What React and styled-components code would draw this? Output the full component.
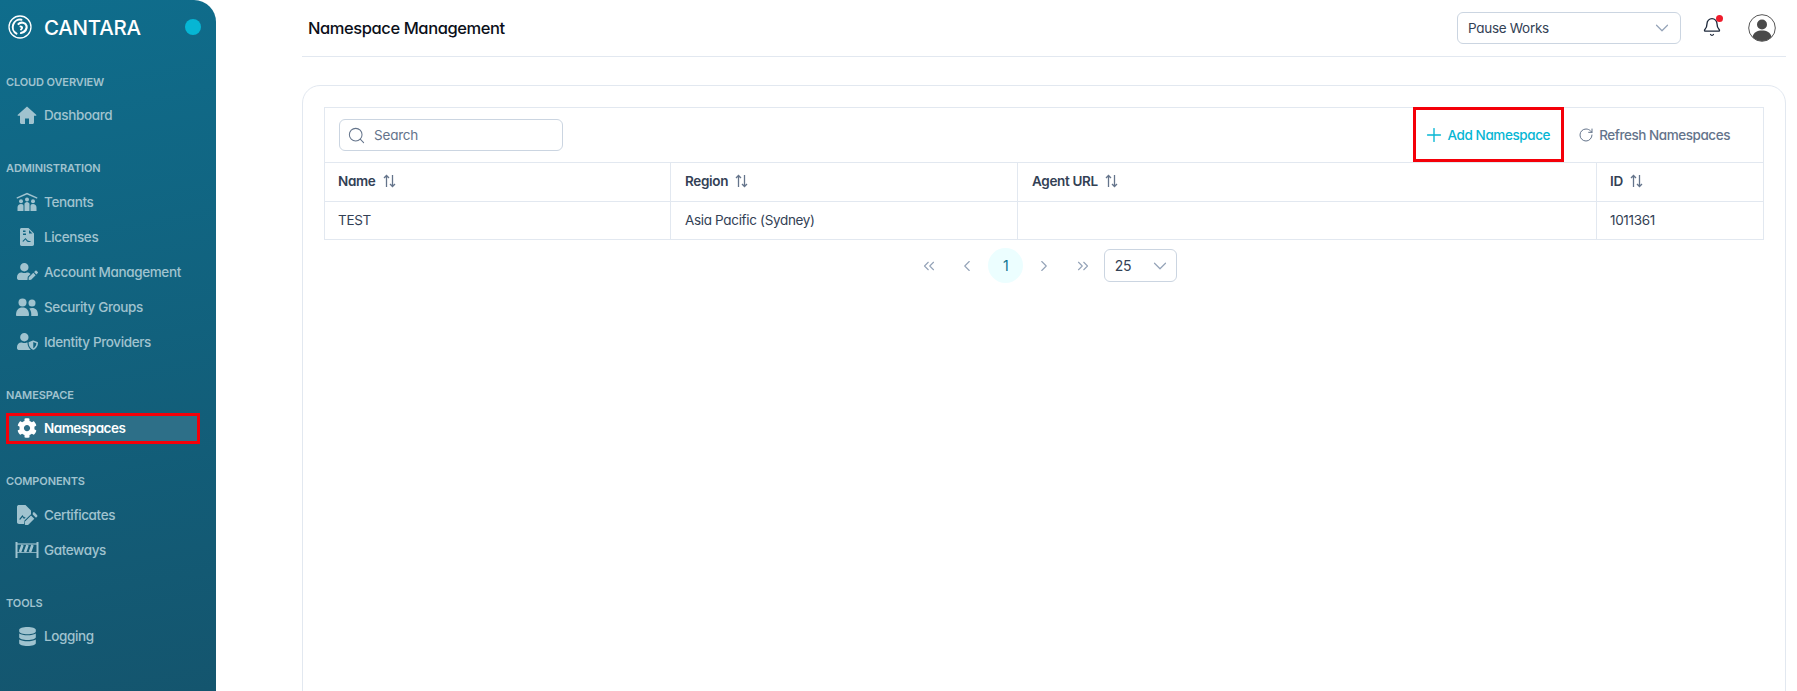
import React from "react";
import styled, { createGlobalStyle } from "styled-components";
import { Bell, ChevronDown, ChevronLeft, ChevronRight, ChevronsLeft, ChevronsRight, Plus, RotateCw, Search } from "lucide-react";
import { FaCog, FaDatabase, FaUserEdit, FaUserShield } from "react-icons/fa";

const Global = createGlobalStyle`
  html, body { margin: 0; padding: 0; background: #fff; }
  body { font-family: Inter, "Noto Sans", sans-serif; font-feature-settings: "cv11" 1; color: #334155; }
  * { box-sizing: border-box; }
`;

const Page = styled.div`
  display: flex;
  height: 691px;
  overflow: hidden;
`;
const Sidebar = styled.aside`
  width: 216px;
  flex: none;
  background: linear-gradient(170deg, #0f6d8c 0%, #14556e 100%);
  border-top-right-radius: 22px;
  display: flex;
  flex-direction: column;
`;
const Brand = styled.div`
  height: 54px;
  display: flex;
  align-items: center;
  padding: 0 15px 0 8px;
  color: #fff;
`;
const BrandName = styled.span`
  font-size: 20.5px;
  font-weight: 500;
  margin-left: 12px;
  flex: 1;
  letter-spacing: -0.25px;
`;
const Dot = styled.span`
  width: 16px;
  height: 16px;
  border-radius: 50%;
  background: #06b6d4;
`;
const Groups = styled.nav`
  display: flex;
  flex-direction: column;
  gap: 28px;
  padding-top: 20px;
`;
const Group = styled.div`
  display: flex;
  flex-direction: column;
`;
const SectionLabel = styled.div`
  height: 16px;
  line-height: 16px;
  margin: -0.5px 0 8px 6px;
  font-size: 11px;
  font-weight: 600;
  color: #a0c3cf;
  letter-spacing: -0.12px;
`;
const NavRow = styled.div`
  height: 35px;
  display: flex;
  align-items: center;
  margin-left: 6px;
  width: 194px;
  position: relative;
  font-size: 13.5px;
  font-weight: ${p => (p.$active ? 600 : 500)};
  color: ${p => (p.$active ? "#fff" : "#a0c3cf")};
  letter-spacing: ${p => (p.$active ? "-0.5px" : "-0.38px")};
  &::before {
    content: "";
    display: ${p => (p.$active ? "block" : "none")};
    position: absolute;
    inset: 2px 0;
    background: #2d6f88;
    border: 3px solid #f40009;
  }
`;
const NavIcon = styled.span`
  position: relative;
  width: 38px;
  flex: none;
  display: flex;
  justify-content: center;
  padding-left: 4px;
  font-size: 20px;
`;
const NavText = styled.span`
  position: relative;
`;
const Main = styled.main`
  flex: 1;
  min-width: 0;
  padding: 0 11px 0 86px;
`;
const Header = styled.header`
  height: 57px;
  display: flex;
  align-items: center;
  border-bottom: 1px solid #e2e8f0;
  padding: 0 10px 1px 6px;
`;
const Title = styled.h1`
  margin: 0;
  flex: 1;
  font-size: 16.5px;
  font-weight: 500;
  color: #0b0f19;
  letter-spacing: -0.42px;
`;
const Select = styled.div`
  display: flex;
  align-items: center;
  justify-content: space-between;
  border: 1px solid #cbd5e1;
  border-radius: 6px;
  color: #334155;
  font-size: 13.5px;
  letter-spacing: -0.3px;
  width: ${p => p.$w}px;
  height: ${p => p.$h}px;
  padding: ${p => p.$pad};
`;
const BellWrap = styled.div`
  position: relative;
  margin-left: 21px;
  width: 21px;
  height: 21px;
  color: #1e293b;
`;
const RedDot = styled.span`
  position: absolute;
  top: -2px;
  right: 0;
  width: 7px;
  height: 7px;
  border-radius: 50%;
  background: #ef1c2c;
`;
const Avatar = styled.svg`
  margin-left: 25px;
  width: 28px;
  height: 28px;
`;
const Card = styled.section`
  margin-top: 28px;
  height: 660px;
  border: 1px solid #e2e8f0;
  border-radius: 18px;
  padding: 21px;
`;
const Table = styled.div`
  border: 1px solid #e2e8f0;
  display: grid;
  grid-template-columns: 346px 347px 579px 1fr;
  color: #334155;
`;
const Toolbar = styled.div`
  grid-column: 1 / -1;
  height: 55px;
  display: flex;
  align-items: center;
  padding: 0 19px 0 14px;
  border-bottom: 1px solid #e2e8f0;
`;
const SearchBox = styled.div`
  width: 224px;
  height: 32px;
  display: flex;
  align-items: center;
  gap: 8px;
  padding: 0 7px;
  margin-right: auto;
  border: 1px solid #cbd5e1;
  border-radius: 6px;
  color: #64748b;
  font-size: 13.5px;
  letter-spacing: -0.2px;
`;
const ActionButton = styled.div`
  display: flex;
  align-items: center;
  height: 55px;
  margin: ${p => (p.$boxed ? "-1px 3px 0 0" : "0")};
  padding: ${p => (p.$boxed ? "0 11px 0 7px" : "0 14px 0 11px")};
  gap: ${p => (p.$boxed ? "2px" : "5px")};
  font-size: 13.5px;
  font-weight: 500;
  letter-spacing: ${p => (p.$boxed ? "-0.4px" : "-0.45px")};
  color: ${p => (p.$boxed ? "#06b6d4" : "#64748b")};
  border: ${p => (p.$boxed ? "3px solid #f40009" : "0")};
`;
const Cell = styled.div`
  display: flex;
  align-items: center;
  height: ${p => (p.$head ? "39px" : "37px")};
  padding: 0 13px 2px ${p => (p.$inset ? "14px" : "13px")};
  font-size: 13.5px;
  letter-spacing: -0.33px;
  font-weight: ${p => (p.$head ? 600 : 400)};
  border-bottom: ${p => (p.$head ? "1px solid #e2e8f0" : "0")};
  border-right: ${p => (p.$last ? "0" : "1px solid #e2e8f0")};
`;
const SortIcon = styled.svg`
  margin-left: 7px;
  width: 13px;
  height: 14px;
  color: #64748b;
`;
const Pager = styled.div`
  display: flex;
  justify-content: center;
  align-items: center;
  gap: 3.5px;
  margin-top: 8px;
  color: #94a3b8;
`;
const PageButton = styled.div`
  width: 35px;
  height: 35px;
  border-radius: 50%;
  display: flex;
  align-items: center;
  justify-content: center;
  font-size: 14px;
  background: ${p => (p.$on ? "#ecfeff" : "transparent")};
  color: ${p => (p.$on ? "#0e7490" : "inherit")};
`;
const PageSize = styled(Select)`
  font-size: 14px;
`;
const PageSizeValue = styled.span`
  color: #334155;
`;

const Sort = () => (
  <SortIcon viewBox="0 0 13 14" fill="none" stroke="currentColor" strokeWidth="1.3">
    <path d="M3.500 13V1.500M1 4l2.500-2.500L6 4M9.500 1v11.500M7 10l2.500 2.500L12 10" />
  </SortIcon>
);

const Logo = () => (
  <svg width="24" height="24" viewBox="0 0 24 24" fill="none" stroke="#fff" strokeLinecap="round">
    <circle cx="12" cy="12" r="11" strokeWidth="1.3" />
    <path d="M13.500 4.700A7.500 7.500 0 0 0 8.500 18.600" strokeWidth="2" />
    <path d="M10.500 9c2.500-2.500 7-1.500 8 1.800.9 3-1.500 6.500-5.500 7.200" strokeWidth="2.200" />
    <path d="M12.500 11.500c1.800 0 2.200 1.800 .5 3" strokeWidth="2" />
  </svg>
);

const HomeIcon = () => (
  <svg width="20" height="20" viewBox="0 0 20 20" fill="currentColor">
    <path d="M10 1.500.8 9.800c-.4.4-.1 1 .4 1h1.800v6.700c0 .8.700 1.500 1.500 1.500h3.500v-5.500h4V19h3.500c.8 0 1.500-.7 1.500-1.500v-6.700h1.800c.5 0 .8-.6.4-1z" />
  </svg>
);

const TenantsIcon = () => (
  <svg width="22" height="20" viewBox="0 0 22 20" fill="currentColor">
    <path d="M11 .8 21.500 5.500l-.5 1.300L11 2.600 1 6.800.5 5.500z" />
    <circle cx="5" cy="9.200" r="2" />
    <circle cx="11" cy="7.500" r="2" />
    <circle cx="17" cy="9.200" r="2" />
    <path d="M1.500 19v-3.500c0-2 1.500-3.500 3.500-3.500s2.500.8 2.500 2V19zM8.500 19v-7c0-1 1.200-2 2.500-2s2.500 1 2.500 2v7zM14.500 19v-5c0-1.200.5-2 2.500-2s3.500 1.500 3.500 3.500V19z" />
  </svg>
);

const LicenseIcon = () => (
  <svg width="16" height="20" viewBox="0 0 16 20" fill="currentColor">
    <path fillRule="evenodd" d="M2.500 1h7L15 6.500v10.800c0 1-.8 1.700-1.700 1.700H2.700C1.700 19 1 18.300 1 17.300V2.500C1 1.700 1.700 1 2.500 1zM4 3.500v1.500h2.500V3.500zM4 6.500V8h3V6.500zM10 3v3.500h3.500zM4 15l2.500-2.500L8 14.500c1 .7 2 .5 3.500.5v-1c-1 0-2 .2-2.800-.4L6.500 11 3.500 14z" />
  </svg>
);

const UsersIcon = () => (
  <svg width="22" height="18" viewBox="0 0 22 18" fill="currentColor">
    <circle cx="6.500" cy="4.500" r="4" />
    <circle cx="16" cy="5" r="3.500" />
    <path d="M0 17c0-5 2.500-7.500 6.500-7.500S13 12 13 17c0 .5-.3 1-1 1H1c-.7 0-1-.5-1-1z" />
    <path d="M14.200 18h6.800c.6 0 1-.4 1-1 0-4.500-2.200-7-6-7-1 0-1.900.2-2.700.6 1.300 1.500 2 3.600 2 6.200 0 .4 0 .8-.1 1.200z" />
  </svg>
);

const CertificateIcon = () => (
  <svg width="21" height="20" viewBox="0 0 21 20" fill="currentColor">
    <path fillRule="evenodd" d="M2 0h6.500l5.500 5.500v3.800L7.500 15.500 7 19H2c-1 0-2-.7-2-1.700V1.700C0 .7 1 0 2 0zM3 15l2.500-3 1.500 2 1.500-1.500-.7-.7-.7.7L5.500 10 2.300 14z" />
    <path d="M15.800 7.800c.6-.6 1.500-.6 2-.1l2.200 2.200c.5.500.5 1.400 0 1.900l-1 1-3.300-3.200zM14 10.500l3.300 3.300-6 6c-.2.200-.4.200-.6.200H8.500c-.5 0-.7-.3-.7-.7v-2.200c0-.2 0-.4.200-.6z" />
  </svg>
);

const GatewayIcon = () => (
  <svg width="24" height="18" viewBox="0 0 24 18" fill="none" stroke="currentColor">
    <path d="M1.500 1v16M22.500 1v16" strokeWidth="2" />
    <path d="M2 3h20" strokeWidth="1.200" />
    <path d="M5 11l2.500-7M10 11l2.500-7M15 11l2.500-7" strokeWidth="2.600" />
    <path d="M2 11.500h20" strokeWidth="0.800" />
  </svg>
);

const nav = [
  { label: "CLOUD OVERVIEW", items: [["Dashboard", <HomeIcon />]] },
  {
    label: "ADMINISTRATION",
    items: [
      ["Tenants", <TenantsIcon />],
      ["Licenses", <LicenseIcon />],
      ["Account Management", <FaUserEdit size={21} />],
      ["Security Groups", <UsersIcon />],
      ["Identity Providers", <FaUserShield size={21} />],
    ],
  },
  { label: "NAMESPACE", items: [["Namespaces", <FaCog size={20} />, true]] },
  {
    label: "COMPONENTS",
    items: [
      ["Certificates", <CertificateIcon />],
      ["Gateways", <GatewayIcon />],
    ],
  },
  { label: "TOOLS", items: [["Logging", <FaDatabase size={19} />]] },
];

export default function App() {
  return (
    <Page>
      <Global />
      <Sidebar>
        <Brand>
          <Logo />
          <BrandName>CANTARA</BrandName>
          <Dot />
        </Brand>
        <Groups>
          {nav.map(g => (
            <Group key={g.label}>
              <SectionLabel>{g.label}</SectionLabel>
              {g.items.map(([text, icon, active]) => (
                <NavRow key={text} $active={active}>
                  <NavIcon>{icon}</NavIcon>
                  <NavText>{text}</NavText>
                </NavRow>
              ))}
            </Group>
          ))}
        </Groups>
      </Sidebar>
      <Main>
        <Header>
          <Title>Namespace Management</Title>
          <Select $w={224} $h={32} $pad="0 7px 0 10px">
            Pause Works
            <ChevronDown size={22} color="#94a3b8" strokeWidth={1.3} />
          </Select>
          <BellWrap>
            <Bell size={20} strokeWidth={1.6} />
            <RedDot />
          </BellWrap>
          <Avatar viewBox="0 0 28 28">
            <circle cx="14" cy="14" r="13.300" fill="#fff" stroke="#555" strokeWidth="1" />
            <circle cx="14" cy="10.500" r="5" fill="#4a4a4a" />
            <path d="M4.500 23c1-5 5-6.500 9.500-6.500s8.500 1.500 9.500 6.500c-2.500 2.500-6 4-9.500 4s-7-1.500-9.500-4z" fill="#4a4a4a" />
          </Avatar>
        </Header>
        <Card>
          <Table>
            <Toolbar>
              <SearchBox>
                <Search size={19} strokeWidth={1.3} />
                Search
              </SearchBox>
              <ActionButton $boxed>
                <Plus size={22} strokeWidth={1.5} />
                Add Namespace
              </ActionButton>
              <ActionButton>
                <RotateCw size={16} strokeWidth={1.5} />
                Refresh Namespaces
              </ActionButton>
            </Toolbar>
            <Cell $head>Name<Sort /></Cell>
            <Cell $head $inset>Region<Sort /></Cell>
            <Cell $head $inset>Agent URL<Sort /></Cell>
            <Cell $head $last>ID<Sort /></Cell>
            <Cell>TEST</Cell>
            <Cell $inset>Asia Pacific (Sydney)</Cell>
            <Cell $inset />
            <Cell $last>1011361</Cell>
          </Table>
          <Pager>
            <PageButton><ChevronsLeft size={18} strokeWidth={1.5} /></PageButton>
            <PageButton><ChevronLeft size={18} strokeWidth={1.5} /></PageButton>
            <PageButton $on>1</PageButton>
            <PageButton><ChevronRight size={18} strokeWidth={1.5} /></PageButton>
            <PageButton><ChevronsRight size={18} strokeWidth={1.5} /></PageButton>
            <PageSize $w={73} $h={33} $pad="0 5px 0 10px">
              <PageSizeValue>25</PageSizeValue>
              <ChevronDown size={22} color="#94a3b8" strokeWidth={1.3} />
            </PageSize>
          </Pager>
        </Card>
      </Main>
    </Page>
  );
}
